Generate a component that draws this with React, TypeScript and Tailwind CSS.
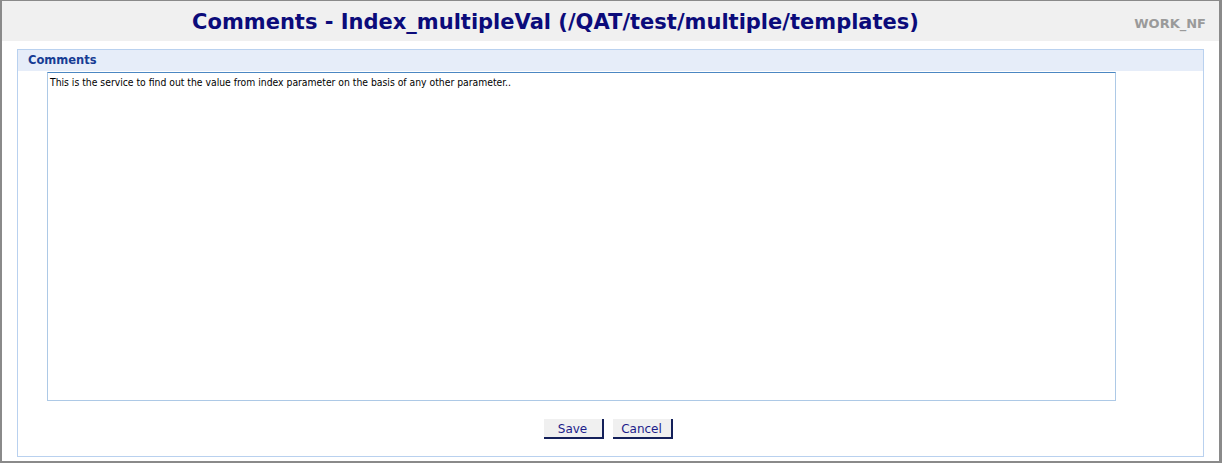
import React from "react";

const verdana = "font-['DejaVu_Sans','Liberation_Sans',sans-serif]";

function Button({ label }: { label: string }) {
  return (
    <button
      type="button"
      className={`${verdana} h-[20px] w-[60px] bg-[#f0f0f0] border-r-2 border-b-2 border-[#14205a] text-[12px] leading-none text-[#1c1c8a] pt-[1px]`}
    >
      {label}
    </button>
  );
}

export default function App() {
  return (
    <div className="w-[1222px] h-[463px] bg-white border-l-2 border-t border-r-[3px] border-b-2 border-[#8a8a8a] flex flex-col">
      <div className="h-[40px] shrink-0 bg-[#f0f0f0] flex items-center">
        <div className="w-[1107px] text-center pt-[3px]">
          <h1 className={`${verdana} font-bold text-[21px] text-[#0b0b7a]`}>
            Comments - Index_multipleVal (/QAT/test/multiple/templates)
          </h1>
        </div>
        <div className="flex-1 text-right pr-[13px] pt-[1px]">
          <span className={`${verdana} font-bold text-[13px] text-[#9a9a9a]`}>WORK_NF</span>
        </div>
      </div>

      <div className="flex-1 pl-[15px] pr-[15px] pt-[8px] pb-[4px]">
        <div className="h-full border border-[#b9d1ef] flex flex-col">
          <div className="h-[21px] shrink-0 bg-[#e6edf9] flex items-center pl-[10px]">
            <span className={`${verdana} font-bold text-[11.5px] text-[#163c94]`}>Comments</span>
          </div>
          <div className="pl-[29px] pt-[1px]">
            <textarea
              readOnly
              defaultValue="This is the service to find out the value from index parameter on the basis of any other parameter.."
              className={`font-['DejaVu_Sans_Condensed','DejaVu_Sans',sans-serif] block w-[1069px] h-[329px] resize-none outline-none border border-[#adc9e6] border-t-[#4b87c2] px-[2px] pt-[3px] text-[10.3px] leading-[13px] text-black`}
            />
          </div>
          <div className="flex justify-center gap-[9px] mt-[18px] pr-[5px]">
            <Button label="Save" />
            <Button label="Cancel" />
          </div>
        </div>
      </div>
    </div>
  );
}
